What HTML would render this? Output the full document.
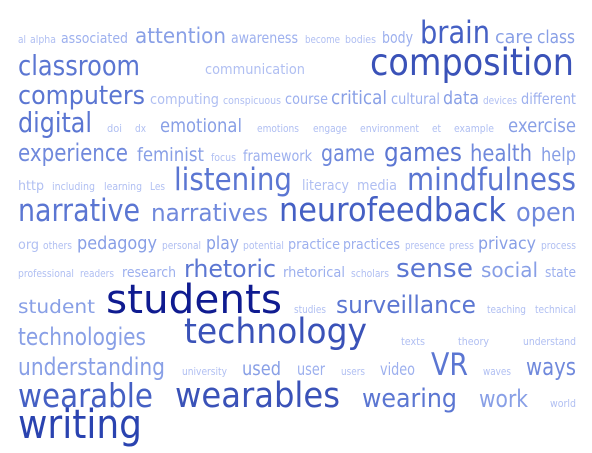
<!DOCTYPE html>
<html><head><meta charset="utf-8"><style>
html,body{margin:0;padding:0;background:#fff;width:592px;height:453px;overflow:hidden}
text{font-family:"DejaVu Sans","Liberation Sans",sans-serif}
.a{fill:#b0bff2}.b{fill:#9db0ee}.c{fill:#889fe6}.d{fill:#7089dc}.e{fill:#5b76d2}.f{fill:#4560c4}.g{fill:#3a52b8}
</style></head><body>
<svg width="592" height="453" xmlns="http://www.w3.org/2000/svg">
<g>
<text class="a" x="18" y="43" font-size="10.5" textLength="8" lengthAdjust="spacingAndGlyphs">al</text>
<text class="a" x="30" y="43" font-size="10.5" textLength="26" lengthAdjust="spacingAndGlyphs">alpha</text>
<text class="b" x="61" y="43" font-size="14" textLength="67" lengthAdjust="spacingAndGlyphs">associated</text>
<text class="c" x="135" y="43" font-size="21" textLength="91" lengthAdjust="spacingAndGlyphs">attention</text>
<text class="b" x="231" y="43" font-size="15" textLength="67" lengthAdjust="spacingAndGlyphs">awareness</text>
<text class="a" x="305" y="43" font-size="10.5" textLength="35" lengthAdjust="spacingAndGlyphs">become</text>
<text class="a" x="345" y="43" font-size="10.5" textLength="31" lengthAdjust="spacingAndGlyphs">bodies</text>
<text class="b" x="382" y="43" font-size="16" textLength="31" lengthAdjust="spacingAndGlyphs">body</text>
<text class="f" x="420" y="43" font-size="31" textLength="70" lengthAdjust="spacingAndGlyphs">brain</text>
<text class="c" x="495" y="43" font-size="18" textLength="38" lengthAdjust="spacingAndGlyphs">care</text>
<text class="c" x="537" y="43" font-size="18" textLength="38" lengthAdjust="spacingAndGlyphs">class</text>

<text class="e" x="18" y="75" font-size="28" textLength="122" lengthAdjust="spacingAndGlyphs">classroom</text>
<text class="a" x="205" y="74" font-size="14" textLength="100" lengthAdjust="spacingAndGlyphs">communication</text>
<text class="g" x="370" y="75" font-size="37" textLength="204" lengthAdjust="spacingAndGlyphs">composition</text>

<text class="e" x="18" y="104" font-size="26" textLength="127" lengthAdjust="spacingAndGlyphs">computers</text>
<text class="a" x="150" y="104" font-size="14" textLength="69" lengthAdjust="spacingAndGlyphs">computing</text>
<text class="a" x="223" y="104" font-size="10.5" textLength="58" lengthAdjust="spacingAndGlyphs">conspicuous</text>
<text class="b" x="285" y="104" font-size="15.5" textLength="43" lengthAdjust="spacingAndGlyphs">course</text>
<text class="c" x="331" y="104" font-size="19" textLength="56" lengthAdjust="spacingAndGlyphs">critical</text>
<text class="b" x="391" y="104" font-size="15.5" textLength="49" lengthAdjust="spacingAndGlyphs">cultural</text>
<text class="c" x="443" y="104" font-size="18" textLength="36" lengthAdjust="spacingAndGlyphs">data</text>
<text class="a" x="483" y="104" font-size="10.5" textLength="34" lengthAdjust="spacingAndGlyphs">devices</text>
<text class="b" x="521" y="104" font-size="15.5" textLength="55" lengthAdjust="spacingAndGlyphs">different</text>

<text class="e" x="18" y="132" font-size="28" textLength="74" lengthAdjust="spacingAndGlyphs">digital</text>
<text class="a" x="107" y="132" font-size="11" textLength="15" lengthAdjust="spacingAndGlyphs">doi</text>
<text class="a" x="135" y="132" font-size="11" textLength="11" lengthAdjust="spacingAndGlyphs">dx</text>
<text class="c" x="160" y="132" font-size="19" textLength="82" lengthAdjust="spacingAndGlyphs">emotional</text>
<text class="a" x="257" y="132" font-size="11" textLength="42" lengthAdjust="spacingAndGlyphs">emotions</text>
<text class="a" x="313" y="132" font-size="11" textLength="34" lengthAdjust="spacingAndGlyphs">engage</text>
<text class="a" x="360" y="132" font-size="11" textLength="59" lengthAdjust="spacingAndGlyphs">environment</text>
<text class="a" x="432" y="132" font-size="11" textLength="9" lengthAdjust="spacingAndGlyphs">et</text>
<text class="a" x="454" y="132" font-size="11" textLength="40" lengthAdjust="spacingAndGlyphs">example</text>
<text class="c" x="508" y="132" font-size="19" textLength="68" lengthAdjust="spacingAndGlyphs">exercise</text>

<text class="d" x="18" y="161" font-size="24" textLength="110" lengthAdjust="spacingAndGlyphs">experience</text>
<text class="c" x="137" y="161" font-size="19" textLength="67" lengthAdjust="spacingAndGlyphs">feminist</text>
<text class="a" x="211" y="161" font-size="11" textLength="25" lengthAdjust="spacingAndGlyphs">focus</text>
<text class="b" x="243" y="161" font-size="15.5" textLength="69" lengthAdjust="spacingAndGlyphs">framework</text>
<text class="d" x="321" y="161" font-size="23" textLength="54" lengthAdjust="spacingAndGlyphs">game</text>
<text class="e" x="384" y="161" font-size="26" textLength="78" lengthAdjust="spacingAndGlyphs">games</text>
<text class="d" x="470" y="161" font-size="23" textLength="62" lengthAdjust="spacingAndGlyphs">health</text>
<text class="c" x="541" y="161" font-size="19" textLength="35" lengthAdjust="spacingAndGlyphs">help</text>

<text class="a" x="18" y="190" font-size="13.5" textLength="26" lengthAdjust="spacingAndGlyphs">http</text>
<text class="a" x="52" y="190" font-size="10.5" textLength="43" lengthAdjust="spacingAndGlyphs">including</text>
<text class="a" x="104" y="190" font-size="10.5" textLength="38" lengthAdjust="spacingAndGlyphs">learning</text>
<text class="a" x="150" y="190" font-size="10.5" textLength="15" lengthAdjust="spacingAndGlyphs">Les</text>
<text class="e" x="174" y="190" font-size="31" textLength="118" lengthAdjust="spacingAndGlyphs">listening</text>
<text class="a" x="302" y="190" font-size="14.5" textLength="47" lengthAdjust="spacingAndGlyphs">literacy</text>
<text class="a" x="357" y="190" font-size="14.5" textLength="40" lengthAdjust="spacingAndGlyphs">media</text>
<text class="e" x="407" y="190" font-size="31" textLength="169" lengthAdjust="spacingAndGlyphs">mindfulness</text>

<text class="e" x="18" y="221" font-size="31" textLength="122" lengthAdjust="spacingAndGlyphs">narrative</text>
<text class="d" x="151" y="221" font-size="24" textLength="117" lengthAdjust="spacingAndGlyphs">narratives</text>
<text class="f" x="279" y="221" font-size="33" textLength="227" lengthAdjust="spacingAndGlyphs">neurofeedback</text>
<text class="d" x="516" y="221" font-size="26" textLength="60" lengthAdjust="spacingAndGlyphs">open</text>

<text class="a" x="18" y="249" font-size="13.5" textLength="21" lengthAdjust="spacingAndGlyphs">org</text>
<text class="a" x="43" y="249" font-size="10.5" textLength="29" lengthAdjust="spacingAndGlyphs">others</text>
<text class="c" x="77" y="249" font-size="18" textLength="80" lengthAdjust="spacingAndGlyphs">pedagogy</text>
<text class="a" x="162" y="249" font-size="10.5" textLength="39" lengthAdjust="spacingAndGlyphs">personal</text>
<text class="c" x="206" y="249" font-size="18" textLength="33" lengthAdjust="spacingAndGlyphs">play</text>
<text class="a" x="243" y="249" font-size="10.5" textLength="41" lengthAdjust="spacingAndGlyphs">potential</text>
<text class="b" x="288" y="249" font-size="14.5" textLength="52" lengthAdjust="spacingAndGlyphs">practice</text>
<text class="b" x="343" y="249" font-size="14.5" textLength="57" lengthAdjust="spacingAndGlyphs">practices</text>
<text class="a" x="405" y="249" font-size="10.5" textLength="40" lengthAdjust="spacingAndGlyphs">presence</text>
<text class="a" x="449" y="249" font-size="10.5" textLength="25" lengthAdjust="spacingAndGlyphs">press</text>
<text class="c" x="478" y="249" font-size="17" textLength="58" lengthAdjust="spacingAndGlyphs">privacy</text>
<text class="a" x="541" y="249" font-size="10.5" textLength="35" lengthAdjust="spacingAndGlyphs">process</text>

<text class="a" x="18" y="277" font-size="10.5" textLength="56" lengthAdjust="spacingAndGlyphs">professional</text>
<text class="a" x="80" y="277" font-size="10.5" textLength="34" lengthAdjust="spacingAndGlyphs">readers</text>
<text class="b" x="122" y="277" font-size="14.5" textLength="54" lengthAdjust="spacingAndGlyphs">research</text>
<text class="e" x="184" y="277" font-size="24" textLength="92" lengthAdjust="spacingAndGlyphs">rhetoric</text>
<text class="b" x="283" y="277" font-size="14.5" textLength="62" lengthAdjust="spacingAndGlyphs">rhetorical</text>
<text class="a" x="351" y="277" font-size="10.5" textLength="38" lengthAdjust="spacingAndGlyphs">scholars</text>
<text class="e" x="396" y="277" font-size="26" textLength="77" lengthAdjust="spacingAndGlyphs">sense</text>
<text class="c" x="481" y="277" font-size="20.5" textLength="57" lengthAdjust="spacingAndGlyphs">social</text>
<text class="b" x="545" y="277" font-size="14.5" textLength="31" lengthAdjust="spacingAndGlyphs">state</text>

<text class="c" x="18" y="313" font-size="19" textLength="77" lengthAdjust="spacingAndGlyphs">student</text>
<text fill="#0f1b90" x="106" y="313" font-size="40" textLength="176" lengthAdjust="spacingAndGlyphs">students</text>
<text class="a" x="294" y="313" font-size="10.5" textLength="32" lengthAdjust="spacingAndGlyphs">studies</text>
<text class="e" x="336" y="313" font-size="24" textLength="140" lengthAdjust="spacingAndGlyphs">surveillance</text>
<text class="a" x="487" y="313" font-size="10.5" textLength="39" lengthAdjust="spacingAndGlyphs">teaching</text>
<text class="a" x="535" y="313" font-size="10.5" textLength="41" lengthAdjust="spacingAndGlyphs">technical</text>

<text class="c" x="18" y="345" font-size="24" textLength="128" lengthAdjust="spacingAndGlyphs">technologies</text>
<text class="g" x="184" y="343" font-size="35" textLength="183" lengthAdjust="spacingAndGlyphs">technology</text>
<text class="a" x="401" y="345" font-size="10.5" textLength="24" lengthAdjust="spacingAndGlyphs">texts</text>
<text class="a" x="458" y="345" font-size="10.5" textLength="31" lengthAdjust="spacingAndGlyphs">theory</text>
<text class="a" x="523" y="345" font-size="10.5" textLength="53" lengthAdjust="spacingAndGlyphs">understand</text>

<text class="c" x="18" y="375" font-size="24" textLength="147" lengthAdjust="spacingAndGlyphs">understanding</text>
<text class="a" x="182" y="375" font-size="10.5" textLength="45" lengthAdjust="spacingAndGlyphs">university</text>
<text class="c" x="242" y="375" font-size="19" textLength="39" lengthAdjust="spacingAndGlyphs">used</text>
<text class="b" x="297" y="375" font-size="17" textLength="28" lengthAdjust="spacingAndGlyphs">user</text>
<text class="a" x="341" y="375" font-size="11" textLength="24" lengthAdjust="spacingAndGlyphs">users</text>
<text class="b" x="380" y="375" font-size="17" textLength="35" lengthAdjust="spacingAndGlyphs">video</text>
<text class="e" x="431" y="375" font-size="31" textLength="37" lengthAdjust="spacingAndGlyphs">VR</text>
<text class="a" x="483" y="375" font-size="10.5" textLength="28" lengthAdjust="spacingAndGlyphs">waves</text>
<text class="d" x="526" y="375" font-size="24" textLength="50" lengthAdjust="spacingAndGlyphs">ways</text>

<text class="f" x="18" y="407" font-size="33" textLength="135" lengthAdjust="spacingAndGlyphs">wearable</text>
<text class="g" x="175" y="407" font-size="35" textLength="165" lengthAdjust="spacingAndGlyphs">wearables</text>
<text class="e" x="362" y="407" font-size="26" textLength="95" lengthAdjust="spacingAndGlyphs">wearing</text>
<text class="c" x="479" y="407" font-size="24" textLength="49" lengthAdjust="spacingAndGlyphs">work</text>
<text class="a" x="550" y="407" font-size="10.5" textLength="26" lengthAdjust="spacingAndGlyphs">world</text>

<text fill="#2a43b0" x="18" y="438" font-size="40" textLength="124" lengthAdjust="spacingAndGlyphs">writing</text>
</g>
</svg>
</body></html>
